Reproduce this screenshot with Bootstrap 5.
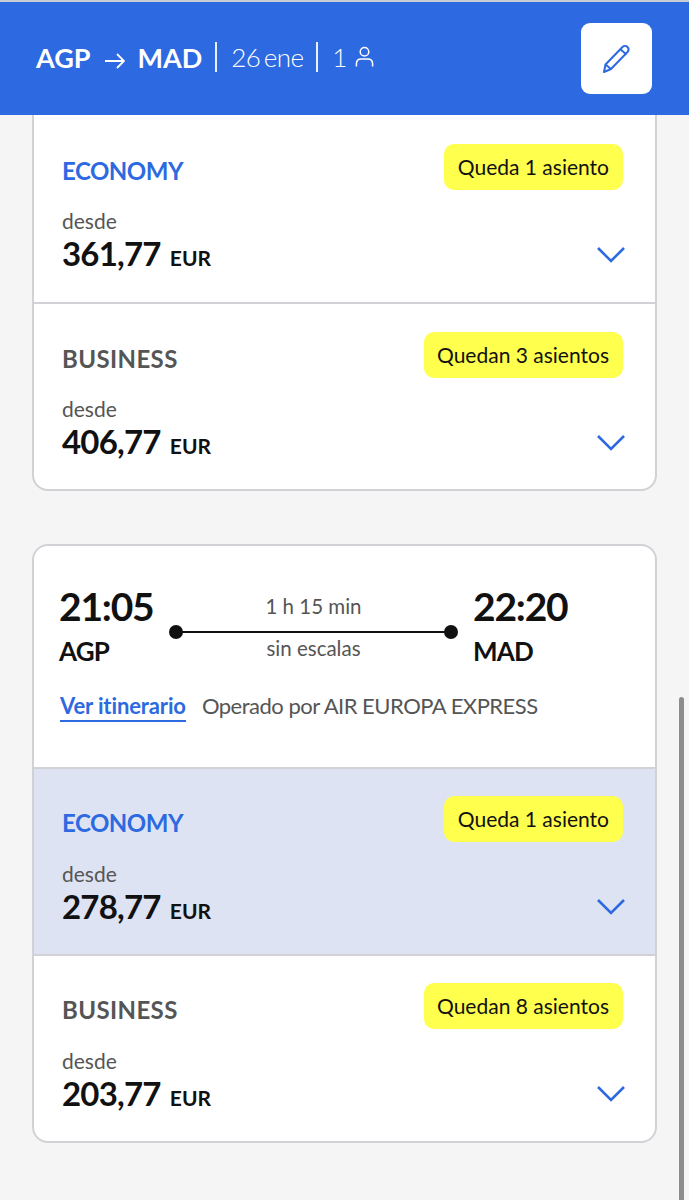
<!DOCTYPE html>
<html lang="es">
<head>
    <meta charset="UTF-8">
    <meta name="viewport" content="width=device-width, initial-scale=1.0">
    <title>Vuelos</title>
    <link href="https://cdn.jsdelivr.net/npm/bootstrap@5.3.0/dist/css/bootstrap.min.css" rel="stylesheet">
    <style>
        html, body { height: 1200px; overflow: hidden; }
        body { background: #f5f5f5; font-family: Lato, "Liberation Sans", sans-serif; color: #111; position: relative; border-top: 2px solid #c9ccd2; }
        .top-bar { background: #2d69e0; height: 113px; padding: 0 37px 0 36px; color: #fff; }
        .route-line { margin-top: -3px; }
        .route { font-size: 27px; font-weight: 700; line-height: 1; }
        .route svg { margin: 0 13px 0 14px; }
        .top-sep { width: 2px; height: 30px; background: #fff; margin: 0 14px 0 13px; opacity: .9; }
        .top-light { font-size: 26px; font-weight: 300; line-height: 1; letter-spacing: -.6px; word-spacing: -3px; }
        .edit-btn { width: 71px; height: 71px; background: #fff; border: 0; border-radius: 9px; padding: 0; }
        .flight-list { padding: 0 32px; }
        .fare-card { background: #fff; border: 2px solid #d0d2d6; border-radius: 16px; overflow: hidden; }
        .fare-card.first-card { border-top: 0; border-radius: 0 0 16px 16px; margin-bottom: 53px; }
        .fare-row { height: 187px; padding: 27px 32px 0 28px; border-top: 2px solid #d0d2d6; }
        .first-card .fare-row { padding-top: 28px; }
        .first-card .fare-row:first-child { border-top: 0; padding-top: 29px; }
        .fare-row.picked { background: #dee3f3; }
        .fare-name { font-size: 24px; font-weight: 700; line-height: 1; margin-top: 15px; letter-spacing: -.5px; }
        .fare-name.eco { color: #2d69e0; }
        .fare-name.biz { color: #555; letter-spacing: .4px; }
        .seats { background: #ffff4d; border-radius: 10px; height: 46px; padding: 0 14px 0 13.500px; font-size: 21px; line-height: 45px; color: #111; }
        .since { font-size: 21px; color: #555; line-height: 1; margin-top: 21px; }
        .first-card .since { margin-top: 20px; }
        .price { font-size: 33px; font-weight: 700; line-height: 1; margin-top: 6px; letter-spacing: -.8px; }
        .price span { font-size: 21px; margin-left: 2px; letter-spacing: 0; }
        .chev { margin-right: -2px; margin-bottom: 7px; }
        .first-card .chev { margin-bottom: 6px; }
        .flight-info { height: 221px; padding: 41px 0 0 25px; }
        .time { font-size: 39px; font-weight: 700; line-height: 1; letter-spacing: -1.2px; }
        .airport { font-size: 26px; font-weight: 700; line-height: 1; margin-top: 12px; letter-spacing: -.8px; }
        .time-col { width: 110px; }
        .path { width: 289px; margin-right: 15px; color: #555; font-size: 20.500px; text-align: center; }
        .path-top { line-height: 1; margin-top: 9px; }
        .path-bot { line-height: 1; }
        .path-line { height: 2px; background: #111; margin: 14px 7px 5px; position: relative; }
        .path-line::before, .path-line::after { content: ""; position: absolute; top: -6px; width: 14px; height: 14px; border-radius: 50%; background: #111; }
        .path-line::before { left: -7px; }
        .path-line::after { right: -7px; }
        .info-line { margin-top: 31px; font-size: 22px; line-height: 1; color: #555; letter-spacing: -.5px; }
        .info-line a { color: #2d69e0; font-weight: 700; text-decoration: none; border-bottom: 2px solid #2d69e0; padding-bottom: 1px; margin: 0 16px 0 1px; letter-spacing: -.12px; }
        .scroll-thumb { position: absolute; left: 679px; top: 695px; width: 5px; height: 510px; background: #8c8c8c; border-radius: 3px; }
    </style>
</head>
<body>
    <div class="top-bar d-flex align-items-center justify-content-between">
        <div class="route-line d-flex align-items-center">
            <span class="route">AGP</span>
            <span class="route"><svg width="20" height="18" viewBox="0 0 20 18" fill="none" stroke="#fff" stroke-width="1.8"><path d="M0 9h19M12 2l7 7-7 7"/></svg></span>
            <span class="route">MAD</span>
            <span class="top-sep"></span>
            <span class="top-light">26 ene</span>
            <span class="top-sep"></span>
            <span class="top-light">1</span>
            <svg class="ms-2" width="19" height="24" viewBox="0 0 20 24" fill="none" stroke="#fff" stroke-width="1.6"><circle cx="10" cy="6.5" r="4.500"/><path d="M1.500 22v-3c0-3 2-5 5-5h7c3 0 5 2 5 5v3"/></svg>
        </div>
        <button class="edit-btn d-flex align-items-center justify-content-center" type="button" aria-label="Editar">
            <svg width="30" height="30" viewBox="0 0 30 30" fill="none" stroke="#2d69e0" stroke-width="2" stroke-linejoin="round"><path d="M2 28l1.500-7.500L20.500 3c1.500-1.500 3.500-1.500 5 0s1.500 3.500 0 5L9 25z"/><path d="M3.500 20.500L9 25M18.500 5.500l6 5"/></svg>
        </button>
    </div>

    <div class="flight-list">
        <div class="fare-card first-card">
            <div class="fare-row">
                <div class="d-flex justify-content-between align-items-start">
                    <div class="fare-name eco">ECONOMY</div>
                    <div class="seats">Queda 1 asiento</div>
                </div>
                <div class="d-flex justify-content-between align-items-end">
                    <div>
                        <div class="since">desde</div>
                        <div class="price">361,77 <span>EUR</span></div>
                    </div>
                    <svg class="chev" width="28" height="18" viewBox="0 0 28 18" fill="none" stroke="#2d69e0" stroke-width="2.6"><path d="M1 2l13 13L27 2"/></svg>
                </div>
            </div>
            <div class="fare-row">
                <div class="d-flex justify-content-between align-items-start">
                    <div class="fare-name biz">BUSINESS</div>
                    <div class="seats">Quedan 3 asientos</div>
                </div>
                <div class="d-flex justify-content-between align-items-end">
                    <div>
                        <div class="since">desde</div>
                        <div class="price">406,77 <span>EUR</span></div>
                    </div>
                    <svg class="chev" width="28" height="18" viewBox="0 0 28 18" fill="none" stroke="#2d69e0" stroke-width="2.6"><path d="M1 2l13 13L27 2"/></svg>
                </div>
            </div>
        </div>

        <div class="fare-card">
            <div class="flight-info">
                <div class="d-flex">
                    <div class="time-col">
                        <div class="time">21:05</div>
                        <div class="airport">AGP</div>
                    </div>
                    <div class="path">
                        <div class="path-top">1 h 15 min</div>
                        <div class="path-line"></div>
                        <div class="path-bot">sin escalas</div>
                    </div>
                    <div>
                        <div class="time">22:20</div>
                        <div class="airport">MAD</div>
                    </div>
                </div>
                <div class="info-line"><a href="#">Ver itinerario</a>Operado por AIR EUROPA EXPRESS</div>
            </div>
            <div class="fare-row picked">
                <div class="d-flex justify-content-between align-items-start">
                    <div class="fare-name eco">ECONOMY</div>
                    <div class="seats">Queda 1 asiento</div>
                </div>
                <div class="d-flex justify-content-between align-items-end">
                    <div>
                        <div class="since">desde</div>
                        <div class="price">278,77 <span>EUR</span></div>
                    </div>
                    <svg class="chev" width="28" height="18" viewBox="0 0 28 18" fill="none" stroke="#2d69e0" stroke-width="2.6"><path d="M1 2l13 13L27 2"/></svg>
                </div>
            </div>
            <div class="fare-row">
                <div class="d-flex justify-content-between align-items-start">
                    <div class="fare-name biz">BUSINESS</div>
                    <div class="seats">Quedan 8 asientos</div>
                </div>
                <div class="d-flex justify-content-between align-items-end">
                    <div>
                        <div class="since">desde</div>
                        <div class="price">203,77 <span>EUR</span></div>
                    </div>
                    <svg class="chev" width="28" height="18" viewBox="0 0 28 18" fill="none" stroke="#2d69e0" stroke-width="2.6"><path d="M1 2l13 13L27 2"/></svg>
                </div>
            </div>
        </div>
    </div>
    <div class="scroll-thumb"></div>

    <script src="https://cdn.jsdelivr.net/npm/bootstrap@5.3.0/dist/js/bootstrap.bundle.min.js"></script>
</body>
</html>
